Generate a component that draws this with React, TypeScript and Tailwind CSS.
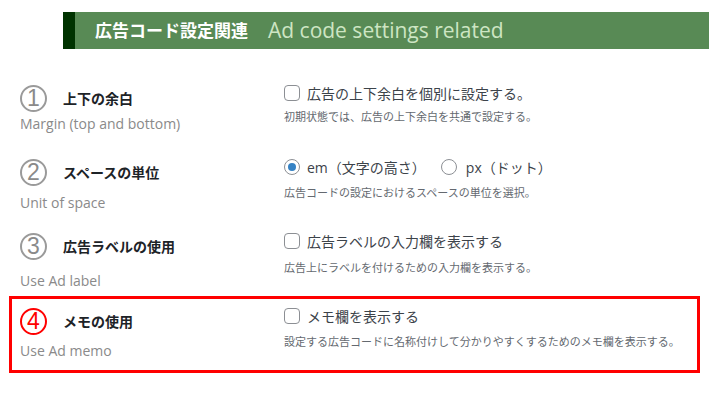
import React from 'react';

const font = { fontFamily: '"Open Sans", "Noto Sans CJK JP", sans-serif' };

const Checkbox = () => (
  <span className="inline-block w-4 h-4 rounded-[4px] border border-[#8c8f94] bg-white shrink-0" />
);

const Radio = ({ checked }: { checked?: boolean }) => (
  <span className="inline-flex items-center justify-center w-4 h-4 rounded-full border border-[#8c8f94] bg-white shrink-0">
    {checked && <span className="w-2 h-2 rounded-full bg-[#3582c4]" />}
  </span>
);

// circled step number, like ① in the original font
const StepNum = ({ n, red }: { n: string; red?: boolean }) => (
  <span
    className={`flex items-center justify-center w-[27px] h-[27px] rounded-full border-2 text-[23px] leading-none ${
      red ? 'border-[#ff0000] text-[#ff0000]' : 'border-[#9a9a9a] text-[#8a8a8a]'
    }`}
    style={{ fontFamily: '"Liberation Sans", Arial, sans-serif' }}
  >
    {n}
  </span>
);

interface RowProps {
  num: string;
  title: string;
  sub: string;
  subGap: string;
  descGap: string;
  red?: boolean;
  control: React.ReactNode;
  desc: string;
}

const Row = ({ num, title, sub, subGap, descGap, red, control, desc }: RowProps) => (
  <div className="flex">
    <div className="w-[264px] shrink-0">
      <div className="flex items-center h-[30px]">
        <div className="w-[43px]">
          <StepNum n={num} red={red} />
        </div>
        <span className="text-[14px] font-bold text-[#1d2327]">{title}</span>
      </div>
      <div className={`${subGap} text-[14px] leading-5 text-[#8a8a8a]`}>{sub}</div>
    </div>
    <div>
      <div className="flex items-center h-5 text-[14px] text-[#3c434a]">{control}</div>
      <div className={`${descGap} text-[11px] leading-4 text-[#646970]`}>{desc}</div>
    </div>
  </div>
);

export default function App() {
  return (
    <div className="w-[709px] h-[395px] bg-white overflow-hidden" style={font}>
      <div className="pt-3 pl-[63px]">
        <div className="flex items-center h-[37px] bg-[#588a55]">
          <div className="w-3 h-full bg-[#003300]" />
          <span className="ml-5 text-[17px] font-bold text-white">広告コード設定関連</span>
          <span className="ml-5 text-[21px] text-[#cde5c3]">Ad code settings related</span>
        </div>
      </div>

      <div className="mt-[34px] pl-5">
        <Row
          num="1"
          title="上下の余白"
          sub="Margin (top and bottom)"
          subGap="mt-px"
          descGap="mt-1.5"
          control={
            <label className="flex items-center gap-[7px]">
              <Checkbox />
              <span>広告の上下余白を個別に設定する。</span>
            </label>
          }
          desc="初期状態では、広告の上下余白を共通で設定する。"
        />
      </div>

      <div className="mt-[23px] pl-5">
        <Row
          num="2"
          title="スペースの単位"
          sub="Unit of space"
          subGap="mt-1.5"
          descGap="mt-2"
          control={
            <div className="flex items-center">
              <label className="flex items-center gap-[7px]">
                <Radio checked />
                <span>em（文字の高さ）</span>
              </label>
              <label className="flex items-center gap-[9px] ml-[15px]">
                <Radio />
                <span>px（ドット）</span>
              </label>
            </div>
          }
          desc="広告コードの設定におけるスペースの単位を選択。"
        />
      </div>

      <div className="mt-[18px] pl-5">
        <Row
          num="3"
          title="広告ラベルの使用"
          sub="Use Ad label"
          subGap="mt-2.5"
          descGap="mt-[9px]"
          control={
            <label className="flex items-center gap-[7px]">
              <Checkbox />
              <span>広告ラベルの入力欄を表示する</span>
            </label>
          }
          desc="広告上にラベルを付けるための入力欄を表示する。"
        />
      </div>

      <div className="mt-[5px] mx-[9px] border-[3px] border-[#ff0000] pt-[7px] pb-[9px] pl-2">
        <Row
          num="4"
          title="メモの使用"
          sub="Use Ad memo"
          subGap="mt-[5px]"
          descGap="mt-2"
          red
          control={
            <label className="flex items-center gap-[7px]">
              <Checkbox />
              <span>メモ欄を表示する</span>
            </label>
          }
          desc="設定する広告コードに名称付けして分かりやすくするためのメモ欄を表示する。"
        />
      </div>
    </div>
  );
}
